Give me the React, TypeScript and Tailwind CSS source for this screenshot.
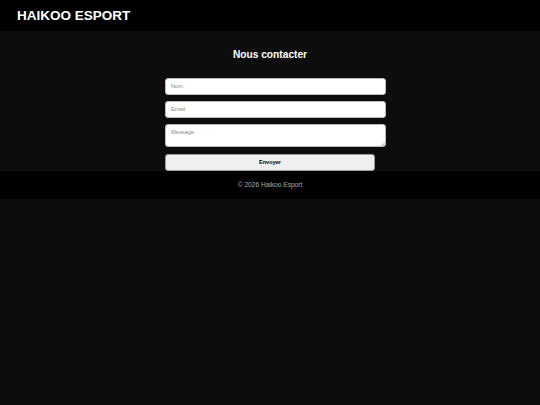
import React from "react";

export default function App() {
  return (
    <div className="min-h-screen bg-[#0d0d0d]" style={{ fontFamily: '"Liberation Sans", Arial, sans-serif' }}>
      <header className="h-[31px] bg-black flex items-center px-[17px]">
        <span className="text-white font-bold text-[13.5px] leading-none">HAIKOO ESPORT</span>
      </header>
      <main className="pt-[18px] flex flex-col items-center">
        <h2 className="text-white font-bold text-[10.2px] leading-[12px] h-[12px] mb-[16.5px] text-center">
          Nous contacter
        </h2>
        <form className="w-[210px] flex flex-col" onSubmit={(e) => e.preventDefault()}>
          <input
            placeholder="Nom"
            className="box-border w-[221px] h-[17px] bg-white rounded-[3px] border border-[#bbb] px-[5px] text-[5.7px] text-black placeholder:text-[#888] outline-none"
          />
          <input
            placeholder="Email"
            className="box-border mt-[6px] w-[221px] h-[17px] bg-white rounded-[3px] border border-[#bbb] px-[5px] text-[5.7px] text-black placeholder:text-[#888] outline-none"
          />
          <div className="relative mt-[6px] w-[221px] h-[23px]">
            <textarea
              placeholder="Message"
              className="box-border block w-full h-full bg-white rounded-[3px] border border-[#bbb] px-[5px] pt-[4px] text-[5.7px] leading-[7px] text-black placeholder:text-[#888] outline-none resize-none"
            />
            <svg className="absolute right-[1px] bottom-[1px] w-[4px] h-[4px] pointer-events-none" viewBox="0 0 4 4">
              <path d="M4 0.5 L0.5 4 M4 2.3 L2.3 4" stroke="#777" strokeWidth="0.6" />
            </svg>
          </div>
          <button
            type="submit"
            className="box-border mt-[7.5px] w-[210px] h-[17px] bg-[#efefef] rounded-[3px] border border-[#999] text-[5.6px] font-bold text-black flex items-center justify-center"
          >
            Envoyer
          </button>
        </form>
      </main>
      <footer className="h-[28px] bg-black flex items-center justify-center">
        <span className="text-[#aaa] text-[6.6px] leading-none">© 2026 Haikoo Esport</span>
      </footer>
    </div>
  );
}
